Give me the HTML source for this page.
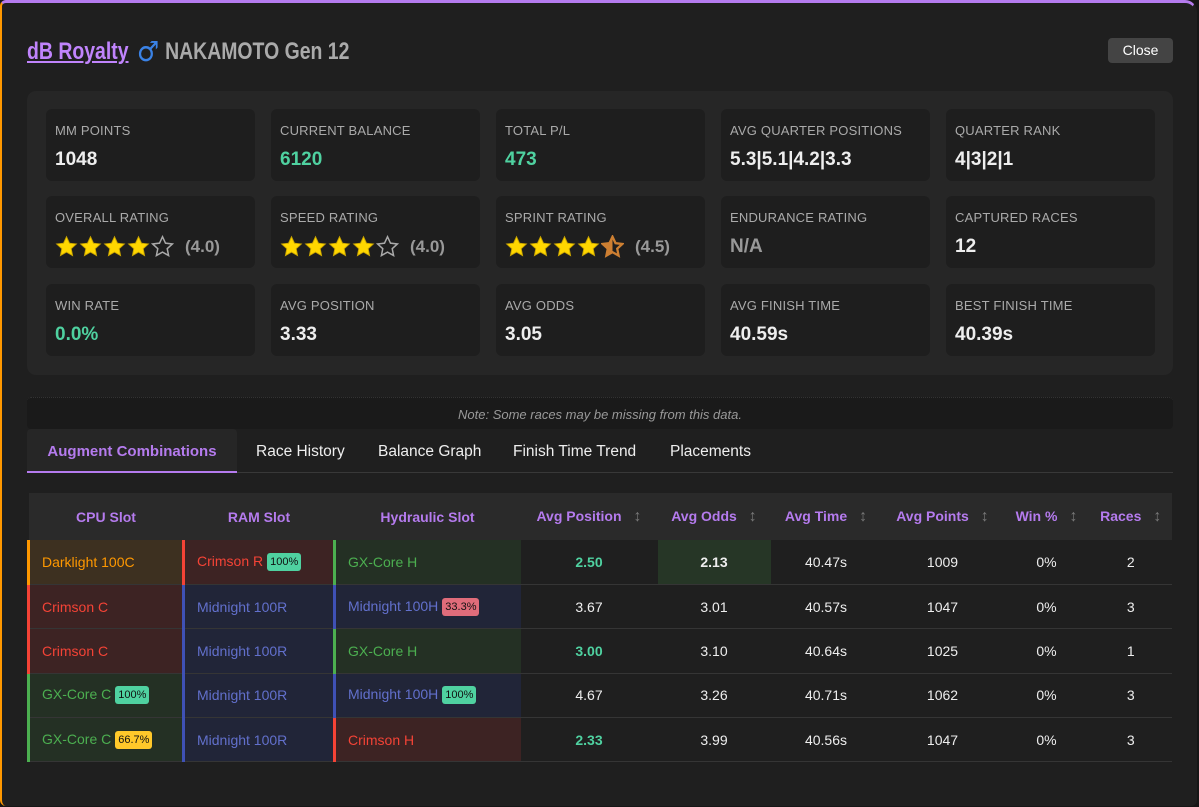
<!DOCTYPE html>
<html><head><meta charset="utf-8"><style>
*{box-sizing:border-box;margin:0;padding:0}
body{width:1199px;height:807px;background:#161616;font-family:"Liberation Sans","DejaVu Sans",sans-serif;overflow:hidden;position:relative}
.modal{position:absolute;left:0;top:0;width:1197px;height:806px;background:#1f1f1f;border-top:3px solid #b57bee;border-left:2px solid #ff9800;border-right:2px solid #1f1f1f;border-radius:6px 12px 6px 6px}
.title{position:absolute;left:25px;top:32px;font-weight:bold;font-size:24px;color:#aaa;white-space:nowrap;transform:scaleX(0.81);transform-origin:left center}
.title a{color:#c084fc;text-decoration:underline}
.title .m{color:#3a82e6;font-weight:normal;margin:0 8px 0 12px;font-size:28px;display:inline-block;vertical-align:-2px;font-family:"DejaVu Sans",sans-serif;transform:scaleX(1.1)}
.close{position:absolute;left:1106px;top:35px;width:65px;height:25px;background:#444;border-radius:4px;color:#fff;font-size:14px;text-align:center;line-height:25px}
.stats{position:absolute;left:25px;top:88px;width:1146px;height:284px;background:#262626;border-radius:9px}
.card{position:absolute;width:209px;height:72px;background:#1e1e1e;border-radius:6px}
.card .l{position:absolute;left:9px;top:14px;font-size:13px;color:#aaa;letter-spacing:.2px;white-space:nowrap}
.card .v{position:absolute;left:9px;top:40px;font-size:19px;font-weight:bold;color:#eee;white-space:nowrap}
.g{color:#4fd1a0!important}
.gr{color:#999!important}
.stars{position:absolute;left:9px;top:39px;display:flex;align-items:center}
.stars svg{margin-right:1px}
.stars span{margin-left:10px;font-size:17px;font-weight:bold;color:#999}
.note{position:absolute;left:25px;top:394px;width:1146px;height:32px;background:#1a1a1a;border-radius:4px;color:#999;font-style:italic;font-size:13px;text-align:center;line-height:34px;border-top:1px dotted #333}
.tabs{position:absolute;left:25px;top:426px;width:1146px;height:44px;border-bottom:1px solid #383838}
.tab{position:absolute;top:0;height:44px;line-height:46px;font-size:15.5px;color:#eee}
.tab.a{left:0;width:210px;background:#262626;color:#b57bee;font-weight:bold;text-align:center;border-bottom:2px solid #b57bee;border-radius:4px 4px 0 0;font-size:15px}
table{position:absolute;left:25px;top:490px;width:1145px;border-collapse:collapse;font-size:14px}
th{background:#2a2a2a;color:#b57bee;height:47px;font-weight:bold;font-size:14px}
th i{font-style:normal;color:#777;margin-left:12px;font-size:16px}
td{height:44.4px;border-bottom:1px solid #353535;text-align:center;color:#eee}
td.s{text-align:left;padding-left:12px;border-left:3px solid;font-weight:normal}
.o{color:#ff9800;background:#3d3020;border-left-color:#ff9800!important}
.r{color:#f44336;background:#3d2323;border-left-color:#f44336!important}
.gn{color:#4caf50;background:#243024;border-left-color:#4caf50!important}
.b{color:#6270cc;background:#212538;border-left-color:#3f51b5!important}
.bd{display:inline-block;font-size:11px;color:#111;padding:3px 3px;border-radius:3px;margin-left:4px;vertical-align:1px}
.bg{background:#4fd1a0}.bp{background:#e06c7a}.by{background:#ffc82a}
.hl{background:#263626;font-weight:bold}
.gb{color:#4fd1a0;font-weight:bold}
</style></head><body>
<div class="modal">
<div class="title"><a>dB Royalty</a><span class="m">♂</span>NAKAMOTO Gen 12</div>
<div class="close">Close</div>
<div class="stats">
<div class="card" style="left:19px;top:18px"><div class="l">MM POINTS</div><div class="v">1048</div></div>
<div class="card" style="left:244px;top:18px"><div class="l">CURRENT BALANCE</div><div class="v g">6120</div></div>
<div class="card" style="left:469px;top:18px"><div class="l">TOTAL P/L</div><div class="v g">473</div></div>
<div class="card" style="left:694px;top:18px"><div class="l">AVG QUARTER POSITIONS</div><div class="v">5.3|5.1|4.2|3.3</div></div>
<div class="card" style="left:919px;top:18px"><div class="l">QUARTER RANK</div><div class="v">4|3|2|1</div></div>

<div class="card" style="left:19px;top:105px"><div class="l">OVERALL RATING</div><div class="stars" id="s1"></div></div>
<div class="card" style="left:244px;top:105px"><div class="l">SPEED RATING</div><div class="stars" id="s2"></div></div>
<div class="card" style="left:469px;top:105px"><div class="l">SPRINT RATING</div><div class="stars" id="s3"></div></div>
<div class="card" style="left:694px;top:105px"><div class="l">ENDURANCE RATING</div><div class="v gr">N/A</div></div>
<div class="card" style="left:919px;top:105px"><div class="l">CAPTURED RACES</div><div class="v">12</div></div>

<div class="card" style="left:19px;top:193px"><div class="l">WIN RATE</div><div class="v g">0.0%</div></div>
<div class="card" style="left:244px;top:193px"><div class="l">AVG POSITION</div><div class="v">3.33</div></div>
<div class="card" style="left:469px;top:193px"><div class="l">AVG ODDS</div><div class="v">3.05</div></div>
<div class="card" style="left:694px;top:193px"><div class="l">AVG FINISH TIME</div><div class="v">40.59s</div></div>
<div class="card" style="left:919px;top:193px"><div class="l">BEST FINISH TIME</div><div class="v">40.39s</div></div>
</div>
<div class="note">Note: Some races may be missing from this data.</div>
<div class="tabs">
<div class="tab a">Augment Combinations</div>
<div class="tab" style="left:229px">Race History</div>
<div class="tab" style="left:351px">Balance Graph</div>
<div class="tab" style="left:486px">Finish Time Trend</div>
<div class="tab" style="left:643px">Placements</div>
</div>
<table>
<tr><th style="width:155px">CPU Slot</th><th style="width:151px">RAM Slot</th><th style="width:186px">Hydraulic Slot</th><th style="width:137px">Avg Position<i>↕</i></th><th style="width:113px">Avg Odds<i>↕</i></th><th style="width:111px">Avg Time<i>↕</i></th><th style="width:122px">Avg Points<i>↕</i></th><th style="width:86px">Win %<i>↕</i></th><th>Races<i>↕</i></th></tr>
<tr><td class="s o">Darklight 100C</td><td class="s r">Crimson R<span class="bd bg">100%</span></td><td class="s gn">GX-Core H</td><td class="gb">2.50</td><td class="hl">2.13</td><td>40.47s</td><td>1009</td><td>0%</td><td>2</td></tr>
<tr><td class="s r">Crimson C</td><td class="s b">Midnight 100R</td><td class="s b">Midnight 100H<span class="bd bp">33.3%</span></td><td>3.67</td><td>3.01</td><td>40.57s</td><td>1047</td><td>0%</td><td>3</td></tr>
<tr><td class="s r">Crimson C</td><td class="s b">Midnight 100R</td><td class="s gn">GX-Core H</td><td class="gb">3.00</td><td>3.10</td><td>40.64s</td><td>1025</td><td>0%</td><td>1</td></tr>
<tr><td class="s gn">GX-Core C<span class="bd bg">100%</span></td><td class="s b">Midnight 100R</td><td class="s b">Midnight 100H<span class="bd bg">100%</span></td><td>4.67</td><td>3.26</td><td>40.71s</td><td>1062</td><td>0%</td><td>3</td></tr>
<tr><td class="s gn">GX-Core C<span class="bd by">66.7%</span></td><td class="s b">Midnight 100R</td><td class="s r">Crimson H</td><td class="gb">2.33</td><td>3.99</td><td>40.56s</td><td>1047</td><td>0%</td><td>3</td></tr>
</table>
</div>
<script>
var P="M10 1.5l2.6 5.6 6 .7-4.5 4.1 1.2 6L10 14.9l-5.3 3 1.2-6L1.4 7.8l6-.7z";
function st(t){return t=="f"?'<svg width="23" height="23" viewBox="0 0 20 20"><path d="'+P+'" fill="#ffd700" stroke="#c9a400" stroke-width=".8"/></svg>':t=="e"?'<svg width="23" height="23" viewBox="0 0 20 20"><path d="'+P+'" fill="none" stroke="#aaa" stroke-width="1.3"/></svg>':'<svg width="23" height="23" viewBox="0 0 20 20"><defs><clipPath id="h"><rect x="0" y="0" width="10" height="20"/></clipPath></defs><path d="'+P+'" fill="none" stroke="#cd7f32" stroke-width="2"/><path d="'+P+'" fill="#cd7f32" clip-path="url(#h)"/></svg>';}
function mk(id,a,v){document.getElementById(id).innerHTML=a.map(st).join("")+"<span>("+v+")</span>";}
mk("s1",["f","f","f","f","e"],"4.0");mk("s2",["f","f","f","f","e"],"4.0");mk("s3",["f","f","f","f","h"],"4.5");
</script>
</body></html>
